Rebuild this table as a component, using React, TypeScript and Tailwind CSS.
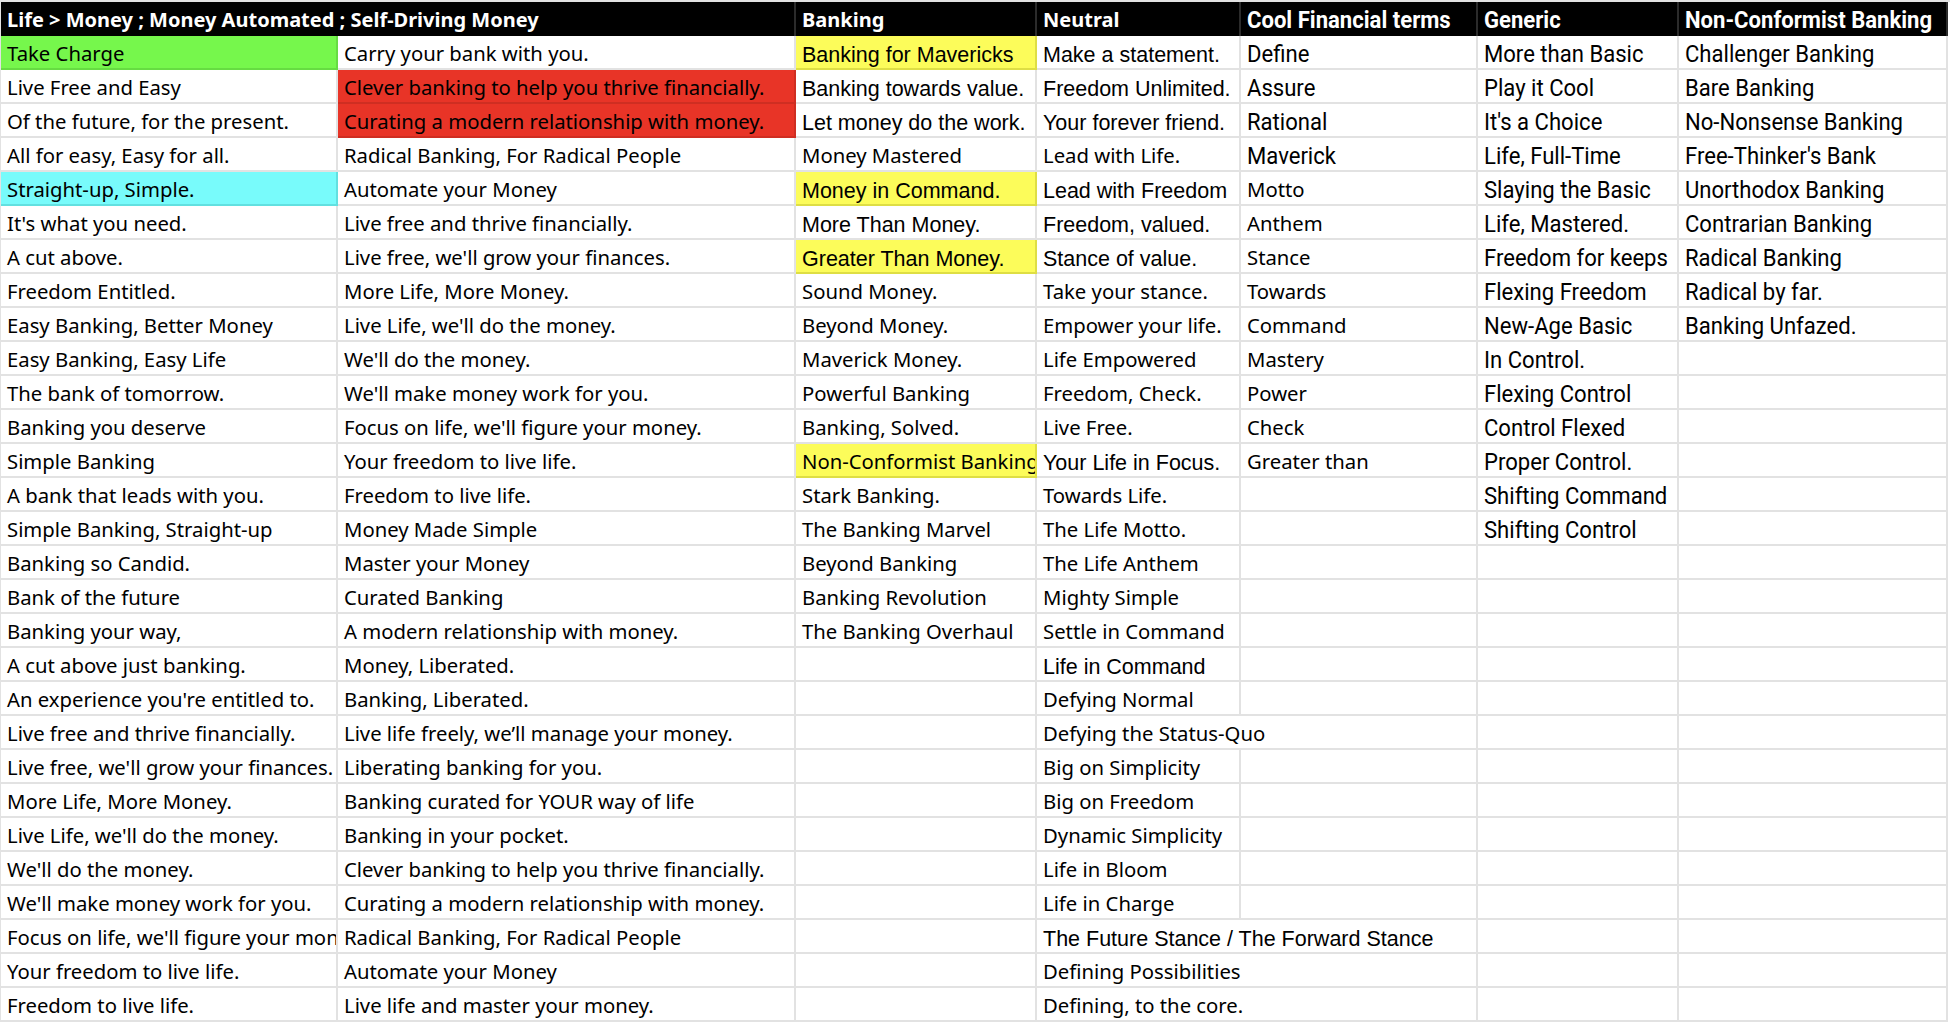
type Cell = { t?: string; bg?: "green" | "red" | "yellow" | "cyan"; f?: "plex" | "arial" | "rob"; span?: boolean };

const col1 = [
  "Take Charge", "Live Free and Easy", "Of the future, for the present.", "All for easy, Easy for all.",
  "Straight-up, Simple.", "It's what you need.", "A cut above.", "Freedom Entitled.",
  "Easy Banking, Better Money", "Easy Banking, Easy Life", "The bank of tomorrow.", "Banking you deserve",
  "Simple Banking", "A bank that leads with you.", "Simple Banking, Straight-up", "Banking so Candid.",
  "Bank of the future", "Banking your way,", "A cut above just banking.", "An experience you're entitled to.",
  "Live free and thrive financially.", "Live free, we'll grow your finances.", "More Life, More Money.",
  "Live Life, we'll do the money.", "We'll do the money.", "We'll make money work for you.",
  "Focus on life, we'll figure your money.", "Your freedom to live life.", "Freedom to live life.",
];

const col2 = [
  "Carry your bank with you.", "Clever banking to help you thrive financially.", "Curating a modern relationship with money.",
  "Radical Banking, For Radical People", "Automate your Money", "Live free and thrive financially.",
  "Live free, we'll grow your finances.", "More Life, More Money.", "Live Life, we'll do the money.",
  "We'll do the money.", "We'll make money work for you.", "Focus on life, we'll figure your money.",
  "Your freedom to live life.", "Freedom to live life.", "Money Made Simple", "Master your Money",
  "Curated Banking", "A modern relationship with money.", "Money, Liberated.", "Banking, Liberated.",
  "Live life freely, we’ll manage your money.", "Liberating banking for you.", "Banking curated for YOUR way of life",
  "Banking in your pocket.", "Clever banking to help you thrive financially.", "Curating a modern relationship with money.",
  "Radical Banking, For Radical People", "Automate your Money", "Live life and master your money.",
];

const col3 = [
  "Banking for Mavericks", "Banking towards value.", "Let money do the work.", "Money Mastered",
  "Money in Command.", "More Than Money.", "Greater Than Money.", "Sound Money.", "Beyond Money.",
  "Maverick Money.", "Powerful Banking", "Banking, Solved.", "Non-Conformist Banking", "Stark Banking.",
  "The Banking Marvel", "Beyond Banking", "Banking Revolution", "The Banking Overhaul",
];

const col4 = [
  "Make a statement.", "Freedom Unlimited.", "Your forever friend.", "Lead with Life.", "Lead with Freedom",
  "Freedom, valued.", "Stance of value.", "Take your stance.", "Empower your life.", "Life Empowered",
  "Freedom, Check.", "Live Free.", "Your Life in Focus.", "Towards Life.", "The Life Motto.", "The Life Anthem",
  "Mighty Simple", "Settle in Command", "Life in Command", "Defying Normal", "Defying the Status-Quo",
  "Big on Simplicity", "Big on Freedom", "Dynamic Simplicity", "Life in Bloom", "Life in Charge",
  "The Future Stance / The Forward Stance", "Defining Possibilities", "Defining, to the core.",
];

const col5 = [
  "Define", "Assure", "Rational", "Maverick", "Motto", "Anthem", "Stance", "Towards", "Command",
  "Mastery", "Power", "Check", "Greater than",
];

const col6 = [
  "More than Basic", "Play it Cool", "It's a Choice", "Life, Full-Time", "Slaying the Basic", "Life, Mastered.",
  "Freedom for keeps", "Flexing Freedom", "New-Age Basic", "In Control.", "Flexing Control", "Control Flexed",
  "Proper Control.", "Shifting Command", "Shifting Control",
];

const col7 = [
  "Challenger Banking", "Bare Banking", "No-Nonsense Banking", "Free-Thinker's Bank", "Unorthodox Banking",
  "Contrarian Banking", "Radical Banking", "Radical by far.", "Banking Unfazed.",
];

// cells typed in Arial in the sheet, the rest use the sheet's default face
const arial3 = [0, 1, 2, 4, 5, 6];
const arial4 = [0, 1, 2, 4, 5, 6, 12, 18, 26];
// Neutral text overflowing into the empty column next to it
const spanRows = [20, 26, 27, 28];

const bgClass = {
  green: "bg-[#76f74c] border-[#66dc42]",
  red: "bg-[#e83427] border-[#cf2e22]",
  yellow: "bg-[#fcfc5a] border-[#dede44]",
  cyan: "bg-[#78fbfb] border-[#62e0e0]",
};

const fontClass = {
  plex: "font-['Noto_Sans',sans-serif] text-[20.3px] pt-[3px]",
  arial: "font-['Liberation_Sans',Arial,sans-serif] text-[21.5px] pt-[6px]",
  rob: "font-['Roboto',sans-serif] text-[24px] pt-[3px]",
};

function buildRow(i: number): Cell[] {
  const cells: Cell[] = [];
  cells.push({ t: col1[i], bg: i === 0 ? "green" : i === 4 ? "cyan" : undefined });
  cells.push({ t: col2[i], bg: i === 1 || i === 2 ? "red" : undefined });
  cells.push({
    t: col3[i],
    f: arial3.includes(i) ? "arial" : "plex",
    bg: [0, 4, 6, 12].includes(i) ? "yellow" : undefined,
  });
  if (spanRows.includes(i)) {
    cells.push({ t: col4[i], f: i === 26 ? "arial" : "plex", span: true });
  } else {
    cells.push({ t: col4[i], f: arial4.includes(i) ? "arial" : "plex" });
    cells.push({ t: col5[i], f: i < 4 ? "rob" : "plex" });
  }
  cells.push({ t: col6[i], f: "rob" });
  cells.push({ t: col7[i], f: "rob" });
  return cells;
}

const headers = [
  { t: "Life > Money ; Money Automated ; Self-Driving Money", span: true, f: "plex" as const },
  { t: "Banking", f: "plex" as const },
  { t: "Neutral", f: "plex" as const },
  { t: "Cool Financial terms", f: "rob" as const },
  { t: "Generic", f: "rob" as const },
  { t: "Non-Conformist Banking", f: "rob" as const },
];

function Text({ t, f }: { t?: string; f?: "plex" | "arial" | "rob" }) {
  if (f === "rob") {
    return <span className="inline-block origin-left scale-x-[0.92]">{t}</span>;
  }
  return <span>{t}</span>;
}

export default function App() {
  const rows = Array.from({ length: 29 }, (_, i) => buildRow(i));
  return (
    <div className="w-[1950px] h-[1024px] bg-white overflow-hidden">
      <div className="grid grid-cols-[337px_458px_241px_204px_237px_201px_269px] border-t-2 border-l border-[#e2e2e2] text-black">
        {headers.map((h, k) => (
          <div
            key={k}
            className={`${h.span ? "col-span-2" : ""} ${h.f === "rob" ? "font-['Roboto',sans-serif] text-[24px]" : "font-['Noto_Sans',sans-serif] text-[20px]"} h-[34px] bg-black text-white font-bold flex items-center pl-[6px] pt-[1px] border-r-2 border-[#2b2b2b] whitespace-nowrap overflow-hidden`}
          >
            <Text t={h.t} f={h.f} />
          </div>
        ))}
        {rows.map((r, i) =>
          r.map((c, j) => (
            <div
              key={`${i}-${j}`}
              className={`${c.span ? "col-span-2" : ""} ${fontClass[c.f ?? "plex"]} ${c.bg ? bgClass[c.bg] : "border-[#e2e2e2]"} h-[34px] border-b-2 border-r-2 flex items-center pl-[6px] whitespace-nowrap overflow-hidden`}
            >
              <Text t={c.t} f={c.f} />
            </div>
          ))
        )}
      </div>
    </div>
  );
}
